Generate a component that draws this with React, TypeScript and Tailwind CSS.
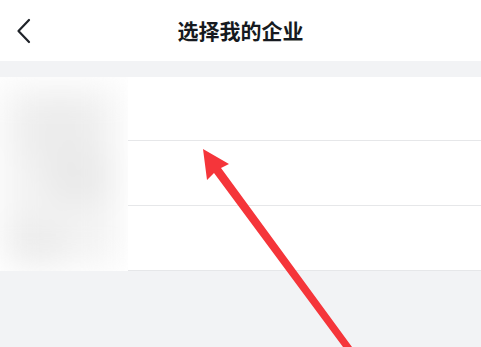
import React from "react";

function BackIcon() {
  return (
    <svg width="16" height="26" viewBox="0 0 16 26" fill="none">
      <path d="M13 2 L2.5 13 L13 24" stroke="#1f2329" strokeWidth="2.2" strokeLinecap="round" strokeLinejoin="round" />
    </svg>
  );
}

function Arrow() {
  return (
    <svg className="pointer-events-none absolute left-0 top-0" width="481" height="347" viewBox="0 0 481 347">
      <polygon
        points="203,149 229,164 221,168 352,347 343,347 214,173 207,180"
        fill="#f5353a"
      />
    </svg>
  );
}

export default function App() {
  return (
    <div
      className="relative h-[347px] w-[481px] overflow-hidden bg-[#f2f3f5]"
      style={{ fontFamily: '"Noto Sans CJK SC", "Noto Sans", sans-serif' }}
    >
      <div className="flex h-[61px] items-center bg-white px-4">
        <div className="w-[60px]">
          <BackIcon />
        </div>
        <div className="flex-1 text-center text-[21px] font-bold text-[#161a20]">选择我的企业</div>
        <div className="w-[60px]" />
      </div>
      <div className="h-[16px]" />
      <div className="flex bg-white">
        <div className="relative w-[128px] overflow-hidden bg-white">
          <div className="absolute inset-0 blur-[16px]">
            <div className="absolute left-[0px] top-[8px] h-[180px] w-[120px] bg-[#f4f4f4]" />
            <div className="absolute left-[20px] top-[20px] h-[70px] w-[80px] rounded-full bg-[#ececec]" />
            <div className="absolute left-[40px] top-[70px] h-[60px] w-[70px] rounded-full bg-[#eaeaea]" />
            <div className="absolute left-[10px] top-[140px] h-[50px] w-[60px] rounded-full bg-[#ececec]" />
          </div>
        </div>
        <div className="flex flex-1 flex-col">
          <div className="h-[64px] border-b border-[#e6e7e9]" />
          <div className="h-[65px] border-b border-[#e6e7e9]" />
          <div className="h-[65px] border-b border-[#e6e7e9]" />
        </div>
      </div>
      <Arrow />
    </div>
  );
}
